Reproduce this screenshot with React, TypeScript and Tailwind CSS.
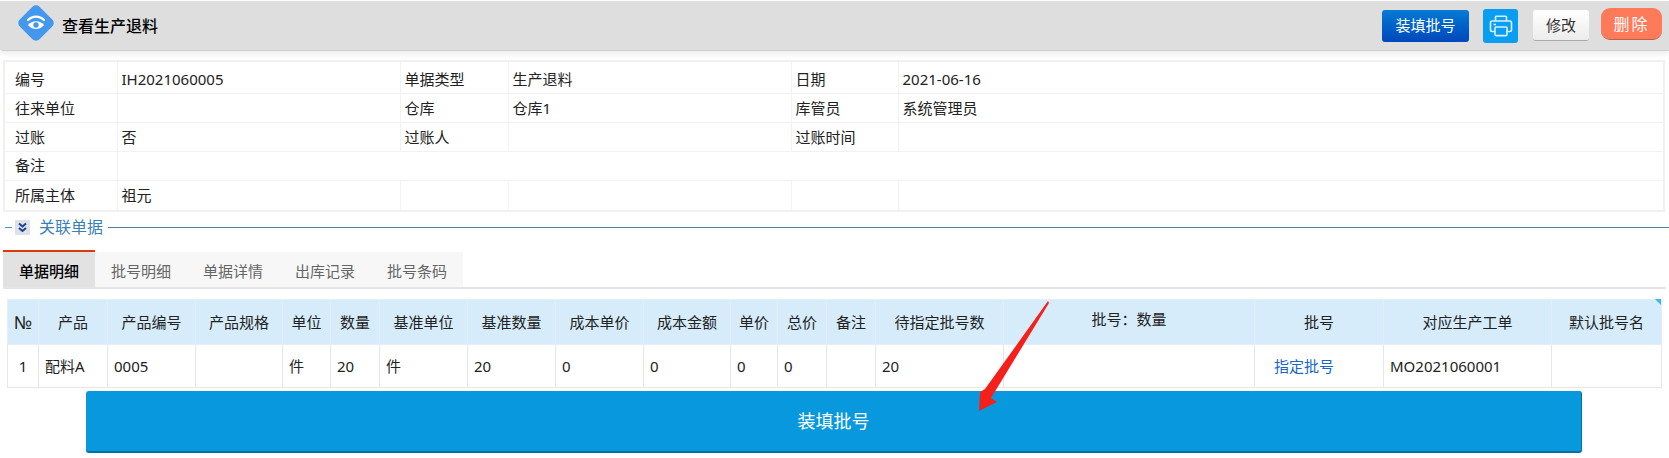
import React from 'react';

const INFO_ROWS: string[][] = [
  ['编号', 'IH2021060005', '单据类型', '生产退料', '日期', '2021-06-16'],
  ['往来单位', '', '仓库', '仓库1', '库管员', '系统管理员'],
  ['过账', '否', '过账人', '', '过账时间', ''],
];

const TABS = ['单据明细', '批号明细', '单据详情', '出库记录', '批号条码'];

const COLUMNS: { title: string; width: number; value: string; align?: 'center' }[] = [
  { title: '№', width: 31, value: '1', align: 'center' },
  { title: '产品', width: 69, value: '配料A' },
  { title: '产品编号', width: 88, value: '0005' },
  { title: '产品规格', width: 87, value: '' },
  { title: '单位', width: 48, value: '件' },
  { title: '数量', width: 49, value: '20' },
  { title: '基准单位', width: 88, value: '件' },
  { title: '基准数量', width: 88, value: '20' },
  { title: '成本单价', width: 88, value: '0' },
  { title: '成本金额', width: 87, value: '0' },
  { title: '单价', width: 47, value: '0' },
  { title: '总价', width: 49, value: '0' },
  { title: '备注', width: 49, value: '' },
  { title: '待指定批号数', width: 128, value: '20' },
  { title: '批号：数量', width: 251, value: '' },
  { title: '批号', width: 129, value: '指定批号' },
  { title: '对应生产工单', width: 168, value: 'MO2021060001' },
  { title: '默认批号名', width: 110, value: '' },
];

const FONT = "font-['Noto_Sans','Noto_Sans_CJK_SC',sans-serif]";

const EyeLogo = () => (
  <svg width="36" height="36" viewBox="0 0 36 36" className="block">
    <rect x="4" y="4" width="28" height="28" rx="5" transform="rotate(45 18 18)" fill="#4398ee" />
    <path d="M10 15C14.5 10.5 21.5 10.5 26 15" fill="none" stroke="#fff" strokeWidth="2.2" strokeLinecap="round" />
    <path d="M10 20C14 15 22 15 26 20C22 25.4 14 25.4 10 20Z" fill="#fff" />
    <circle cx="18" cy="20" r="2.7" fill="#4398ee" />
  </svg>
);

const PrinterIcon = () => (
  <svg width="24" height="22" viewBox="0 0 24 22" fill="none" stroke="#d9f1ff" strokeWidth="1.6" className="block">
    <path d="M6.5 6V2.2c0-.6.4-1 1-1h9c.6 0 1 .4 1 1V6" />
    <path d="M6 16.5H3.2c-1 0-1.7-.7-1.7-1.7V7.7c0-1 .7-1.7 1.7-1.7h17.6c1 0 1.7.7 1.7 1.7v7.1c0 1-.7 1.7-1.7 1.7H18" />
    <rect x="6" y="12" width="12" height="8.6" rx="1" />
    <path d="M4.5 9.5h2.5" />
  </svg>
);

const DoubleChevron = () => (
  <span className="w-[15px] h-[15px] bg-[#dde1e8] flex items-center justify-center">
    <svg width="11" height="11" viewBox="0 0 11 11" fill="none" stroke="#1c3f94" strokeWidth="2" className="block">
      <path d="M2 1.5L5.5 4.5L9 1.5" />
      <path d="M2 6L5.5 9L9 6" />
    </svg>
  </span>
);

export default function App() {
  return (
    <div className={`${FONT} relative h-[458px] overflow-hidden bg-white text-[15px] text-[#222]`}>
      {/* Header */}
      <div className="h-[50px] mt-px bg-[#dedede] border-b border-[#cfcfcf] rounded-bl-[3px] shadow-[0_3px_6px_rgba(0,0,0,0.08)] flex items-center justify-between pl-[18px] pr-[7px]">
        <div className="flex items-center gap-[8px]">
          <span className="mb-[6px]"><EyeLogo /></span>
          <span className="text-[16px] font-medium text-black">查看生产退料</span>
        </div>
        <div className="flex items-center">
          <button className="w-[87px] h-[32px] rounded-[3px] bg-gradient-to-b from-[#0b7ad4] to-[#0047bb] text-white">装填批号</button>
          <button className="ml-[14px] w-[35px] h-[34px] rounded-[3px] bg-[#0a9ef2] flex items-center justify-center"><PrinterIcon /></button>
          <button className="ml-[15px] w-[56px] h-[31px] rounded-[3px] bg-gradient-to-b from-white to-[#ececec] border-b border-[#aaa] text-[#333]">修改</button>
          <button className="ml-[12px] mb-[3px] w-[61px] h-[32px] rounded-[9px] bg-[#ff7a59] border-b border-[#b9614c] text-white text-[16px] tracking-[2px]">删除</button>
        </div>
      </div>

      {/* Document info */}
      <div className="mt-[9px] ml-[3px] mr-[4px]">
        <table className="w-full table-fixed border-collapse border-2 border-[#f0f0f0]">
          <colgroup>
            <col className="w-[113px]" />
            <col className="w-[283px]" />
            <col className="w-[108px]" />
            <col className="w-[283px]" />
            <col className="w-[107px]" />
            <col />
          </colgroup>
          <tbody>
            {INFO_ROWS.map((row, r) => (
              <tr key={row[0]} className={r === 0 ? 'h-[32px]' : 'h-[29px]'}>
                {row.map((cell, i) => (
                  <td key={i} className={`border border-[#f2f2f2] py-0 leading-[20px] ${i === 0 ? 'px-[10px]' : 'px-[4px]'} ${r === 0 ? 'pt-[4px]' : ''}`}>{cell}</td>
                ))}
              </tr>
            ))}
            <tr className="h-[29px]">
              <td className="border border-[#f2f2f2] px-[10px]">备注</td>
              <td colSpan={5} className="border border-[#f2f2f2] px-[4px]"></td>
            </tr>
            <tr className="h-[31px]">
              <td className="border border-[#f2f2f2] px-[10px]">所属主体</td>
              <td className="border border-[#f2f2f2] px-[4px]">祖元</td>
              <td className="border border-[#f2f2f2]"></td>
              <td className="border border-[#f2f2f2]"></td>
              <td className="border border-[#f2f2f2]"></td>
              <td className="border border-[#f2f2f2]"></td>
            </tr>
          </tbody>
        </table>
      </div>

      {/* Related documents legend */}
      <div className="mt-[7px] h-[16px] flex items-center pl-[5px]">
        <span className="w-[7px] h-px bg-[#4d94c6]" />
        <span className="ml-[3px]"><DoubleChevron /></span>
        <span className="ml-[9px] text-[16px] text-[#3a7fb8]">关联单据</span>
        <span className="ml-[5px] flex-1 h-px bg-[#4d7f9f]" />
      </div>

      {/* Tabs */}
      <div className="mt-[15px] mx-[3px] border-b-[2px] border-[#e4e4e4] flex">
        {TABS.map((tab, i) => (
          <div
            key={tab}
            className={
              i === 0
                ? 'w-[92px] h-[37px] pt-[4px] border-t-2 border-[#dd3a0c] bg-[#e2e2e2] font-medium text-black flex items-center justify-center'
                : 'w-[92px] h-[35px] mt-[2px] pt-[4px] bg-[#f7f7f7] text-[#666] flex items-center justify-center'
            }
          >
            {tab}
          </div>
        ))}
      </div>

      {/* Detail grid */}
      <div className="relative mt-[10px] ml-[7px] w-[1654px]">
        <table className="w-full table-fixed border-collapse border border-[#e2e2e2]">
          <colgroup>
            {COLUMNS.map((c) => (
              <col key={c.title} style={{ width: c.width }} />
            ))}
          </colgroup>
          <thead>
            <tr className="h-[45px] bg-[#d6ecfb]">
              {COLUMNS.map((c) => (
                <th key={c.title} className={`border border-[#e3eef6] px-0 font-normal text-[#222] ${c.title === '批号：数量' ? 'pb-[6px]' : ''} ${c.title === '№' ? 'text-[18px]' : ''}`}>
                  {c.title}
                </th>
              ))}
            </tr>
          </thead>
          <tbody>
            <tr className="h-[43px]">
              {COLUMNS.map((c) => (
                <td
                  key={c.title}
                  className={`border border-[#e6e6e6] ${c.value === '指定批号' ? 'pl-[19px] text-[#1a66c4]' : 'px-[6px]'} ${c.align === 'center' ? 'text-center' : ''}`}
                >
                  {c.value}
                </td>
              ))}
            </tr>
          </tbody>
        </table>
        <span className="absolute right-0 top-0 w-0 h-0 border-l-[6px] border-l-transparent border-t-[6px] border-t-[#3fb5f0]" />
      </div>

      {/* Fill button */}
      <button className="block mt-[3px] ml-[86px] w-[1496px] h-[62px] rounded-[3px] bg-[#0798de] border-b-2 border-r border-[#066fa5] text-white text-[18px]">
        装填批号
      </button>

      {/* Annotation arrow */}
      <svg className="absolute left-0 top-0 pointer-events-none" width="1669" height="458">
        <polygon points="1048,301 1049,303 991,398 997,402 979,411 980,392 985,389" fill="#f5201a" />
      </svg>
    </div>
  );
}
